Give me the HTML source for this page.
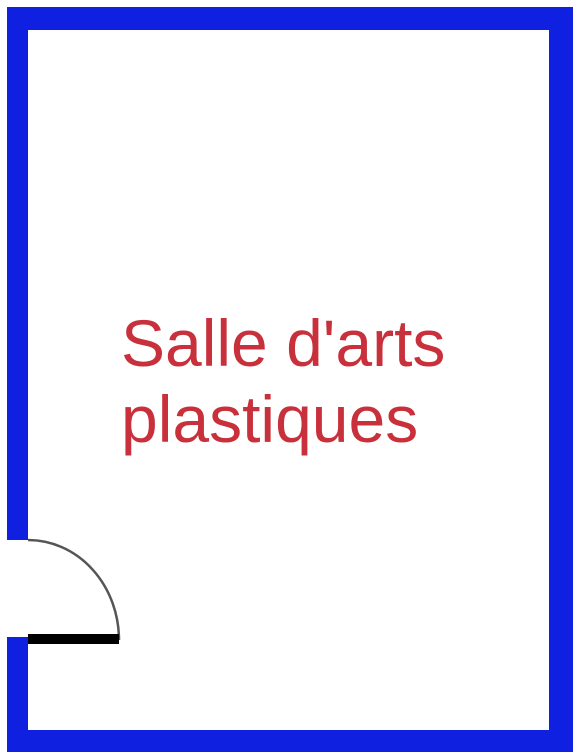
<!DOCTYPE html>
<html><head><style>
html,body{margin:0;padding:0;background:#fff;}
body{width:582px;height:756px;position:relative;overflow:hidden;}
.w{position:absolute;background:#1020e0;}
.t{position:absolute;left:121px;font-family:"Liberation Sans",Arial,sans-serif;font-size:66px;color:#c8303c;white-space:nowrap;line-height:76px;}
</style></head><body>
<div class="w" style="left:7px;top:7px;width:566px;height:23px;"></div>
<div class="w" style="left:549px;top:7px;width:24px;height:745px;"></div>
<div class="w" style="left:7px;top:730px;width:566px;height:22px;"></div>
<div class="w" style="left:7px;top:7px;width:21px;height:533px;"></div>
<div class="w" style="left:7px;top:637px;width:21px;height:115px;"></div>
<svg style="position:absolute;left:0;top:0" width="582" height="756">
<path d="M28 540 A 91 100 0 0 1 119 640" fill="none" stroke="#555" stroke-width="2.5"/>
<rect x="28" y="634" width="91" height="10" fill="#000"/>
</svg>
<div class="t" style="top:305px;">Salle d'arts<br>plastiques</div>
</body></html>
